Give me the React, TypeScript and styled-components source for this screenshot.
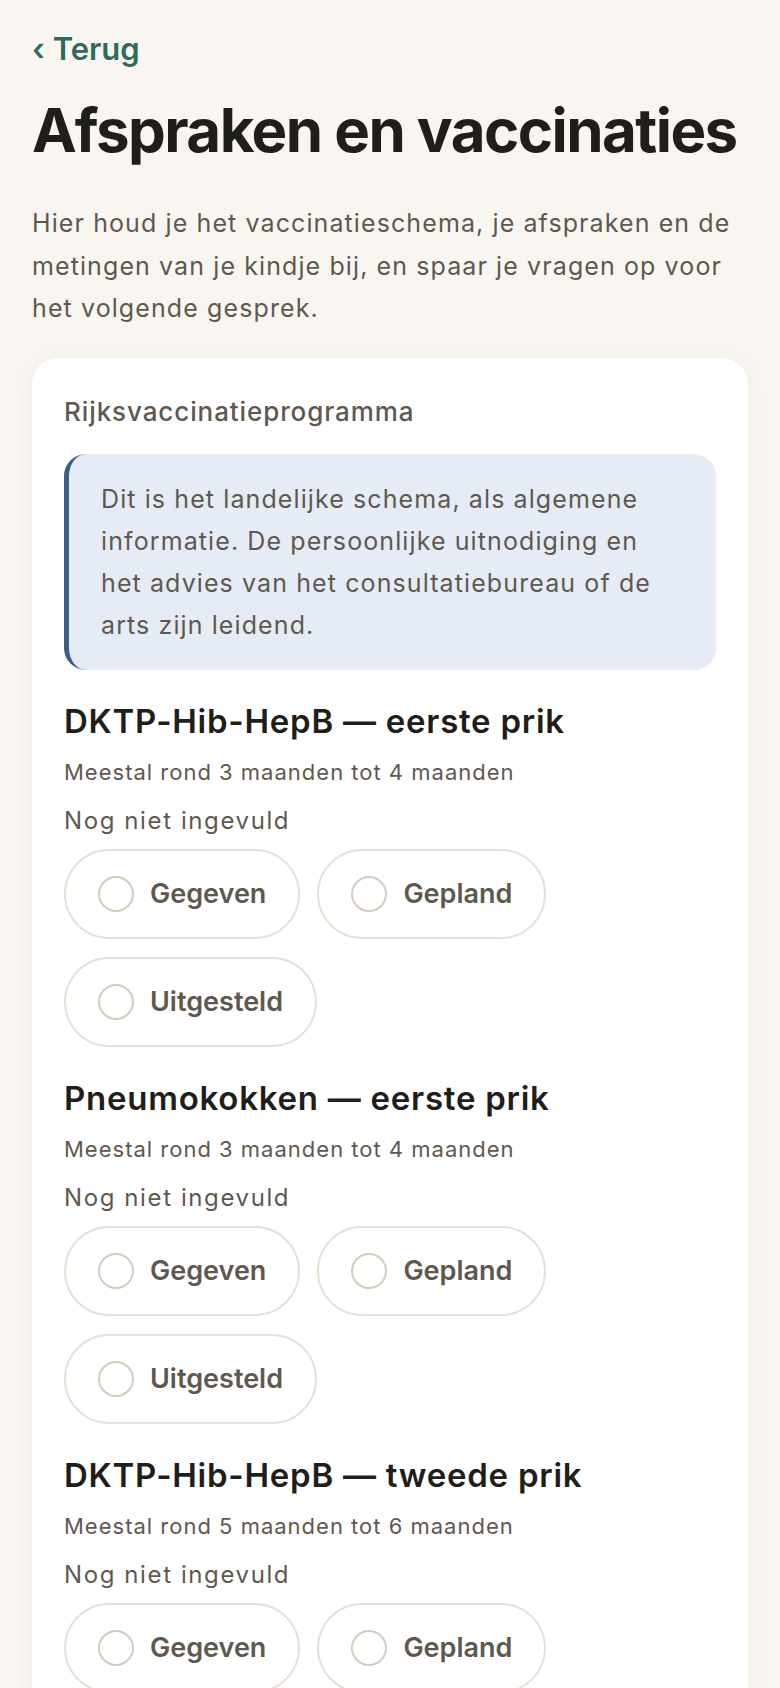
import React from "react";
import styled, { createGlobalStyle } from "styled-components";

const GlobalStyle = createGlobalStyle`
  html, body {
    margin: 0;
    padding: 0;
    background: #f9f6f1;
  }
  body {
    font-family: Inter, "Noto Sans", "Liberation Sans", sans-serif;
    -webkit-font-smoothing: antialiased;
  }
  * { box-sizing: border-box; }
`;

const Page = styled.main`
  padding: 30px 32px 48px;
  display: flex;
  flex-direction: column;
`;

const BackLink = styled.a`
  font-size: 31px;
  line-height: 38px;
  font-weight: 600;
  color: #2f6b5a;
  text-decoration: none;
  align-self: flex-start;
`;

const Title = styled.h1`
  margin: 26px 0 0;
  font-size: 60px;
  line-height: 72px;
  font-weight: 700;
  letter-spacing: -1.55px;
  color: #1f1e1b;
`;

const Intro = styled.p`
  margin: 36px 0 0;
  font-size: 25px;
  line-height: 42.5px;
  letter-spacing: 1.1px;
  color: #5f584f;
`;

const Card = styled.section`
  margin-top: 28px;
  background: #ffffff;
  border-radius: 26px;
  padding: 36px 32px 40px;
  box-shadow: 0 2px 18px rgba(90, 70, 40, 0.06);
`;

const CardHeading = styled.h2`
  margin: 0;
  font-size: 26px;
  line-height: 36px;
  font-weight: 500;
  letter-spacing: 0.9px;
  color: #5f584f;
`;

const Notice = styled.div`
  margin-top: 24px;
  background: #e5ecf5;
  border-left: 5px solid #3a5e86;
  border-radius: 22px;
  padding: 24px 28px 24px 32px;
  font-size: 25px;
  line-height: 42px;
  letter-spacing: 1.1px;
  color: #5f584f;
`;

const Item = styled.div`
  margin-top: 31px;
  display: flex;
  flex-direction: column;
`;

const ItemTitle = styled.h3`
  margin: 0;
  font-size: 33px;
  line-height: 40px;
  font-weight: 600;
  letter-spacing: 0.75px;
  color: #1f1e1b;
`;

const ItemMeta = styled.div`
  margin-top: 15px;
  font-size: 22px;
  line-height: 32px;
  letter-spacing: 1px;
  color: #5f584f;
`;

const ItemStatus = styled.div`
  margin-top: 15px;
  font-size: 24px;
  line-height: 36px;
  letter-spacing: 1.6px;
  color: #5f584f;
`;

const Options = styled.div`
  margin-top: 10px;
  display: flex;
  flex-wrap: wrap;
  gap: 18px 17px;
`;

const Pill = styled.button`
  height: 90px;
  display: inline-flex;
  align-items: center;
  gap: 16px;
  padding: 0 32px;
  background: #ffffff;
  border: 2px solid #e8e0d4;
  border-radius: 45px;
  font-family: inherit;
  font-size: 27px;
  font-weight: 600;
  letter-spacing: 0;
  color: #5f584f;
  cursor: pointer;
`;

const Radio = styled.span`
  width: 36px;
  height: 36px;
  flex: none;
  border-radius: 50%;
  border: 2px solid #d6cbbd;
  background: #ffffff;
`;

type Vaccine = { name: string; period: string };

const vaccines: Vaccine[] = [
  { name: "DKTP-Hib-HepB — eerste prik", period: "Meestal rond 3 maanden tot 4 maanden" },
  { name: "Pneumokokken — eerste prik", period: "Meestal rond 3 maanden tot 4 maanden" },
  { name: "DKTP-Hib-HepB — tweede prik", period: "Meestal rond 5 maanden tot 6 maanden" },
  { name: "Pneumokokken — tweede prik", period: "Meestal rond 5 maanden tot 6 maanden" },
];

const options = ["Gegeven", "Gepland", "Uitgesteld"];

export default function App() {
  return (
    <>
      <GlobalStyle />
      <Page>
        <BackLink href="#">‹ Terug</BackLink>
        <Title>Afspraken en vaccinaties</Title>
        <Intro>
          Hier houd je het vaccinatieschema, je afspraken en de
          <br />
          metingen van je kindje bij, en spaar je vragen op voor
          <br />
          het volgende gesprek.
        </Intro>
        <Card>
          <CardHeading>Rijksvaccinatieprogramma</CardHeading>
          <Notice>
            Dit is het landelijke schema, als algemene
            <br />
            informatie. De persoonlijke uitnodiging en
            <br />
            het advies van het consultatiebureau of de
            <br />
            arts zijn leidend.
          </Notice>
          {vaccines.map((v) => (
            <Item key={v.name}>
              <ItemTitle>{v.name}</ItemTitle>
              <ItemMeta>{v.period}</ItemMeta>
              <ItemStatus>Nog niet ingevuld</ItemStatus>
              <Options>
                {options.map((o) => (
                  <Pill key={o} type="button">
                    <Radio />
                    {o}
                  </Pill>
                ))}
              </Options>
            </Item>
          ))}
        </Card>
      </Page>
    </>
  );
}
